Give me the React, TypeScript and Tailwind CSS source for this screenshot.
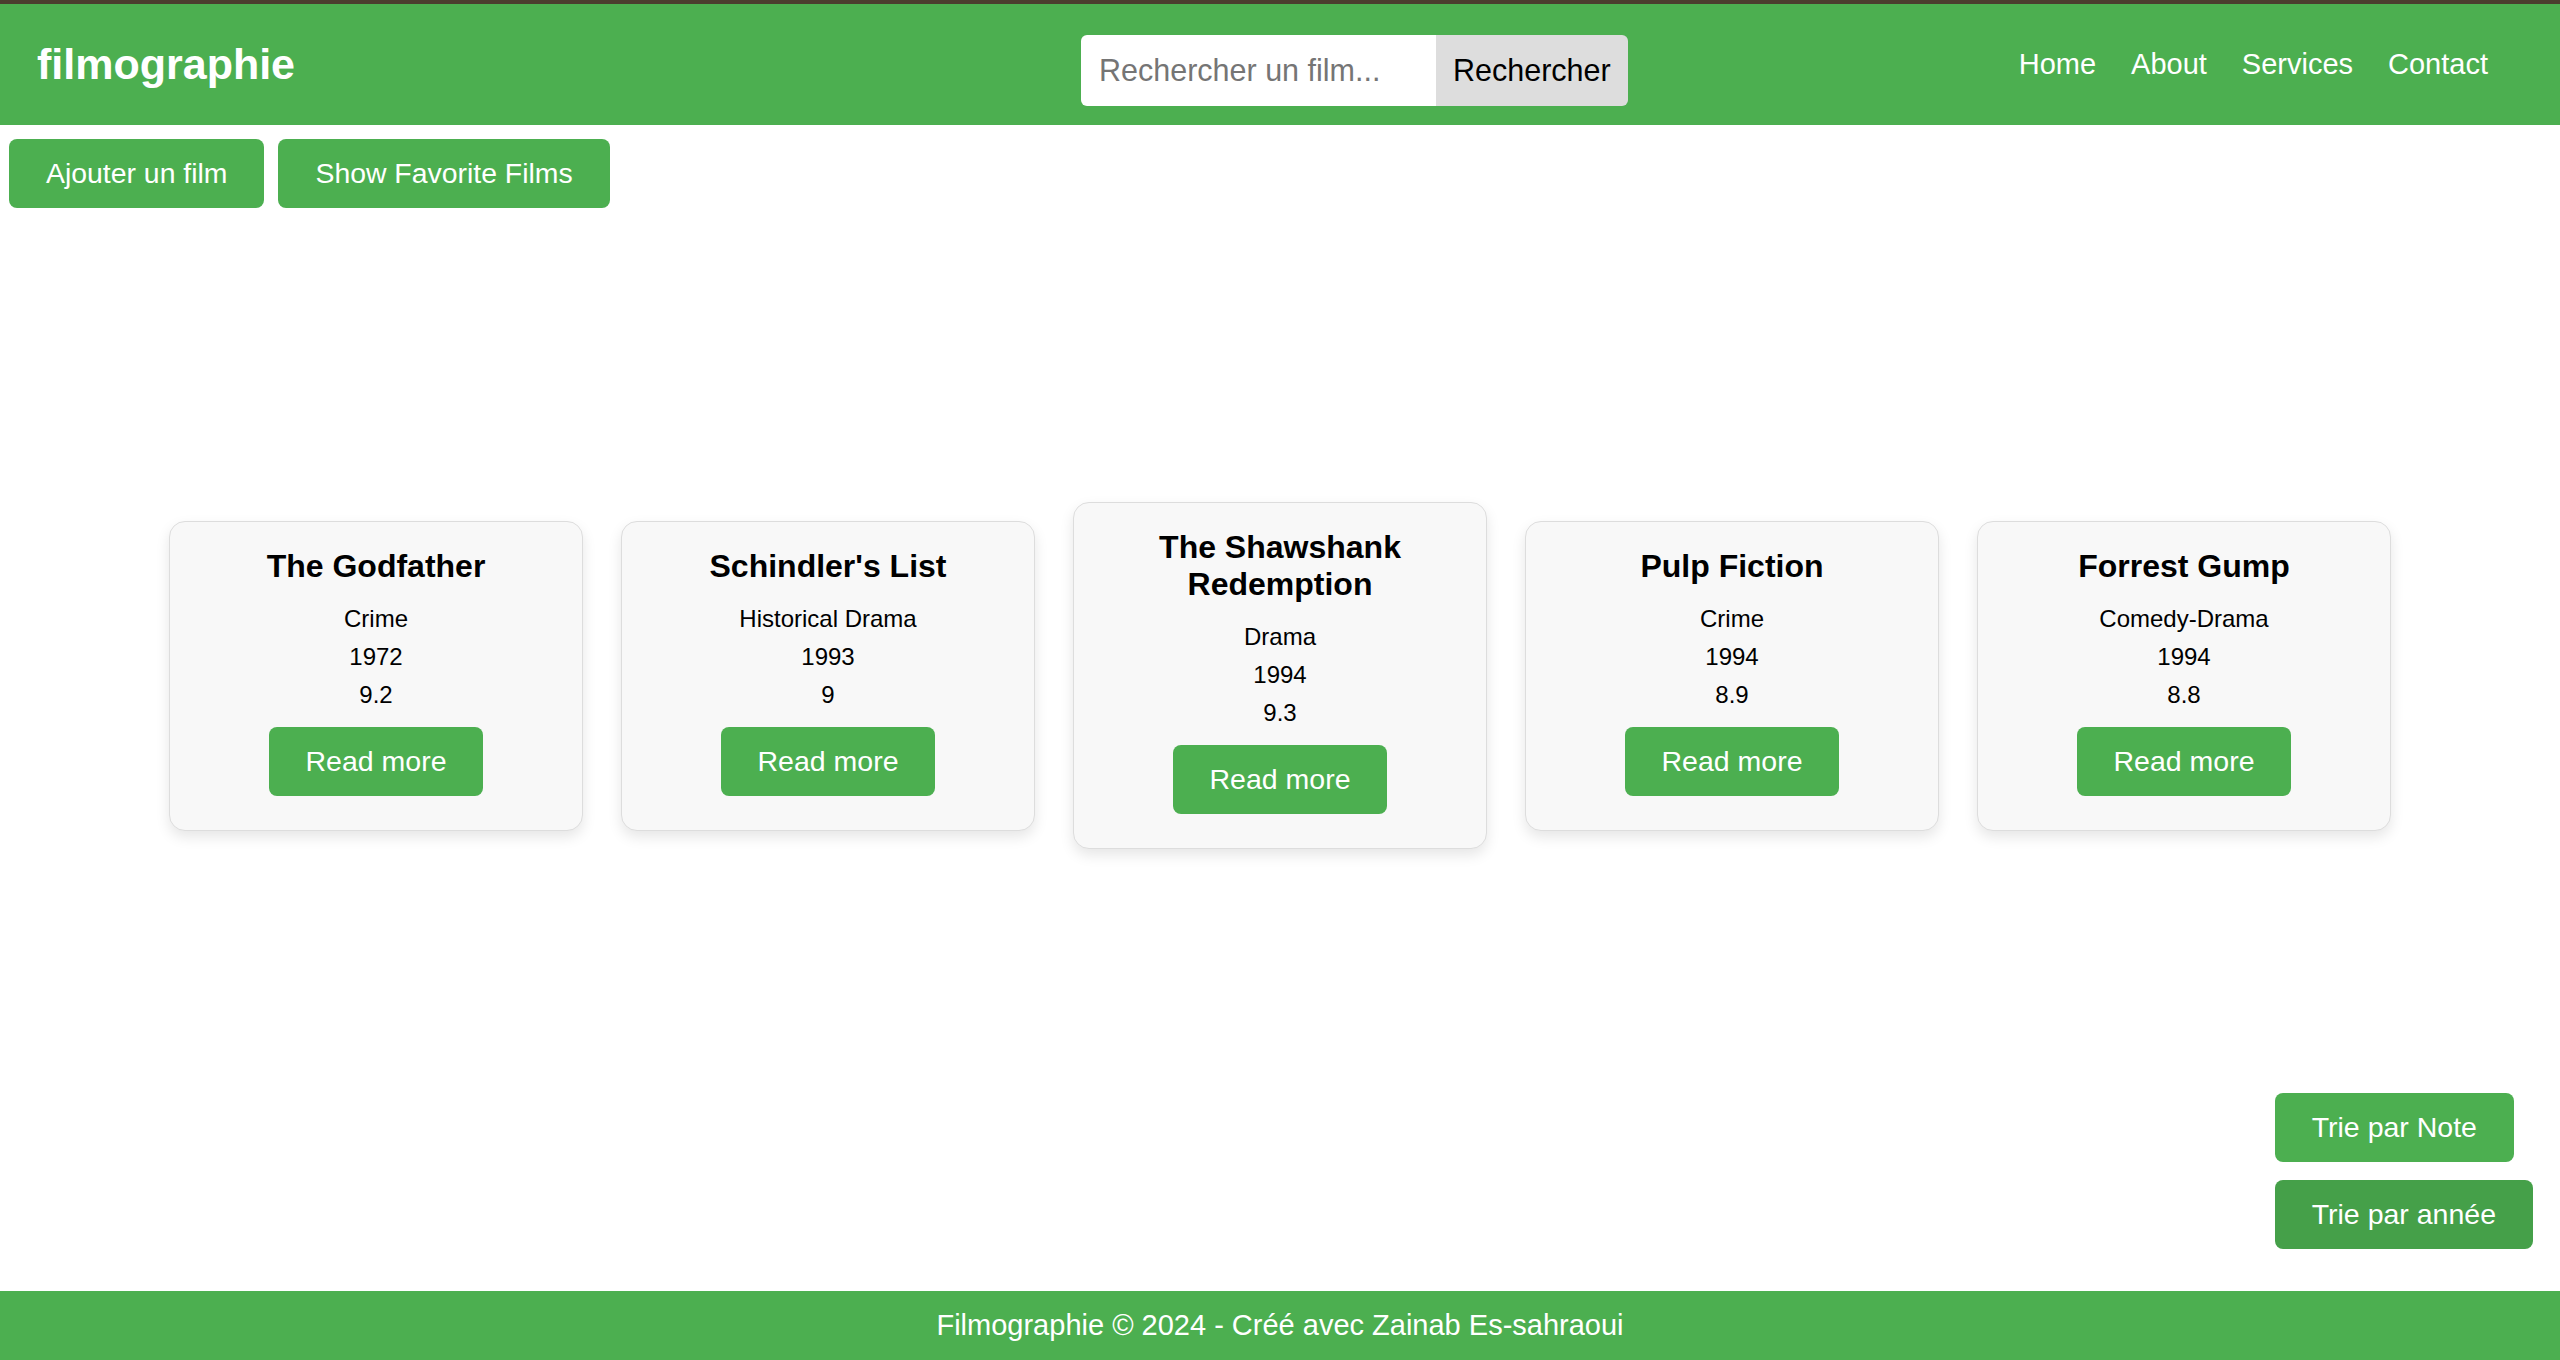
import React from "react";

const films = [
    { title: "The Godfather", genre: "Crime", year: 1972, note: "9.2" },
    { title: "Schindler's List", genre: "Historical Drama", year: 1993, note: "9" },
    { title: "The Shawshank Redemption", genre: "Drama", year: 1994, note: "9.3" },
    { title: "Pulp Fiction", genre: "Crime", year: 1994, note: "8.9" },
    { title: "Forrest Gump", genre: "Comedy-Drama", year: 1994, note: "8.8" },
];

function FilmCard({ film }: { film: (typeof films)[number] }) {
    return (
        <div className="w-[414px] rounded-[16px] border border-[#dddddd] bg-[#f8f8f8] px-[20px] pt-[26px] pb-[34px] text-center shadow-[0_6px_14px_rgba(0,0,0,0.1)]">
            <h2 className="mb-[15px] text-[32px] font-bold leading-[37px] text-black">{film.title}</h2>
            <p className="text-[24px] leading-[38px] text-black">{film.genre}</p>
            <p className="text-[24px] leading-[38px] text-black">{film.year}</p>
            <p className="text-[24px] leading-[38px] text-black">{film.note}</p>
            <button className="mt-[13px] rounded-[8px] bg-[#4caf50] px-[37px] py-[18px] text-[28.5px] leading-[33px] text-white">
                Read more
            </button>
        </div>
    );
}

export default function App() {
    return (
        <div className="flex min-h-screen flex-col bg-white font-['Liberation_Sans',Arial,sans-serif]">
            <div className="h-[4px] bg-[#4b3e2e]"></div>
            <header className="flex h-[121px] items-center bg-[#4caf50] pl-[37px] pr-[72px]">
                <h1 className="text-[43px] font-bold text-white">filmographie</h1>
                <div className="ml-[786px] mt-[12px] flex h-[71px] overflow-hidden rounded-[6px]">
                    <input
                        type="text"
                        placeholder="Rechercher un film..."
                        className="w-[355px] bg-white px-[18px] text-[30.5px] text-black outline-none placeholder:text-[#757575]"
                    />
                    <button className="bg-[#dddddd] px-[17px] text-[30.5px] text-black">Rechercher</button>
                </div>
                <nav className="ml-auto flex gap-[35px] text-[29px] text-white">
                    <a href="#">Home</a>
                    <a href="#">About</a>
                    <a href="#">Services</a>
                    <a href="#">Contact</a>
                </nav>
            </header>

            <div className="flex gap-[14px] pl-[9px] pt-[14px]">
                <button className="rounded-[8px] bg-[#4caf50] px-[37px] py-[18px] text-[28.4px] leading-[33px] text-white">
                    Ajouter un film
                </button>
                <button className="rounded-[8px] bg-[#4caf50] px-[37px] py-[18px] text-[28.4px] leading-[33px] text-white">
                    Show Favorite Films
                </button>
            </div>

            <main className="flex items-center justify-center gap-[38px] pt-[294px]">
                {films.map((film) => (
                    <FilmCard key={film.title} film={film} />
                ))}
            </main>

            <div className="mr-[27px] mt-auto mb-[42px] flex flex-col items-start gap-[18px] self-end">
                <button className="rounded-[8px] bg-[#4caf50] px-[37px] py-[18px] text-[28.5px] leading-[33px] text-white">
                    Trie par Note
                </button>
                <button className="rounded-[8px] bg-[#45a049] px-[37px] py-[18px] text-[28.5px] leading-[33px] text-white">
                    Trie par année
                </button>
            </div>

            <footer className="flex h-[69px] items-center justify-center bg-[#4caf50] text-[29px] text-white">
                Filmographie © 2024 - Créé avec Zainab Es-sahraoui
            </footer>
        </div>
    );
}
